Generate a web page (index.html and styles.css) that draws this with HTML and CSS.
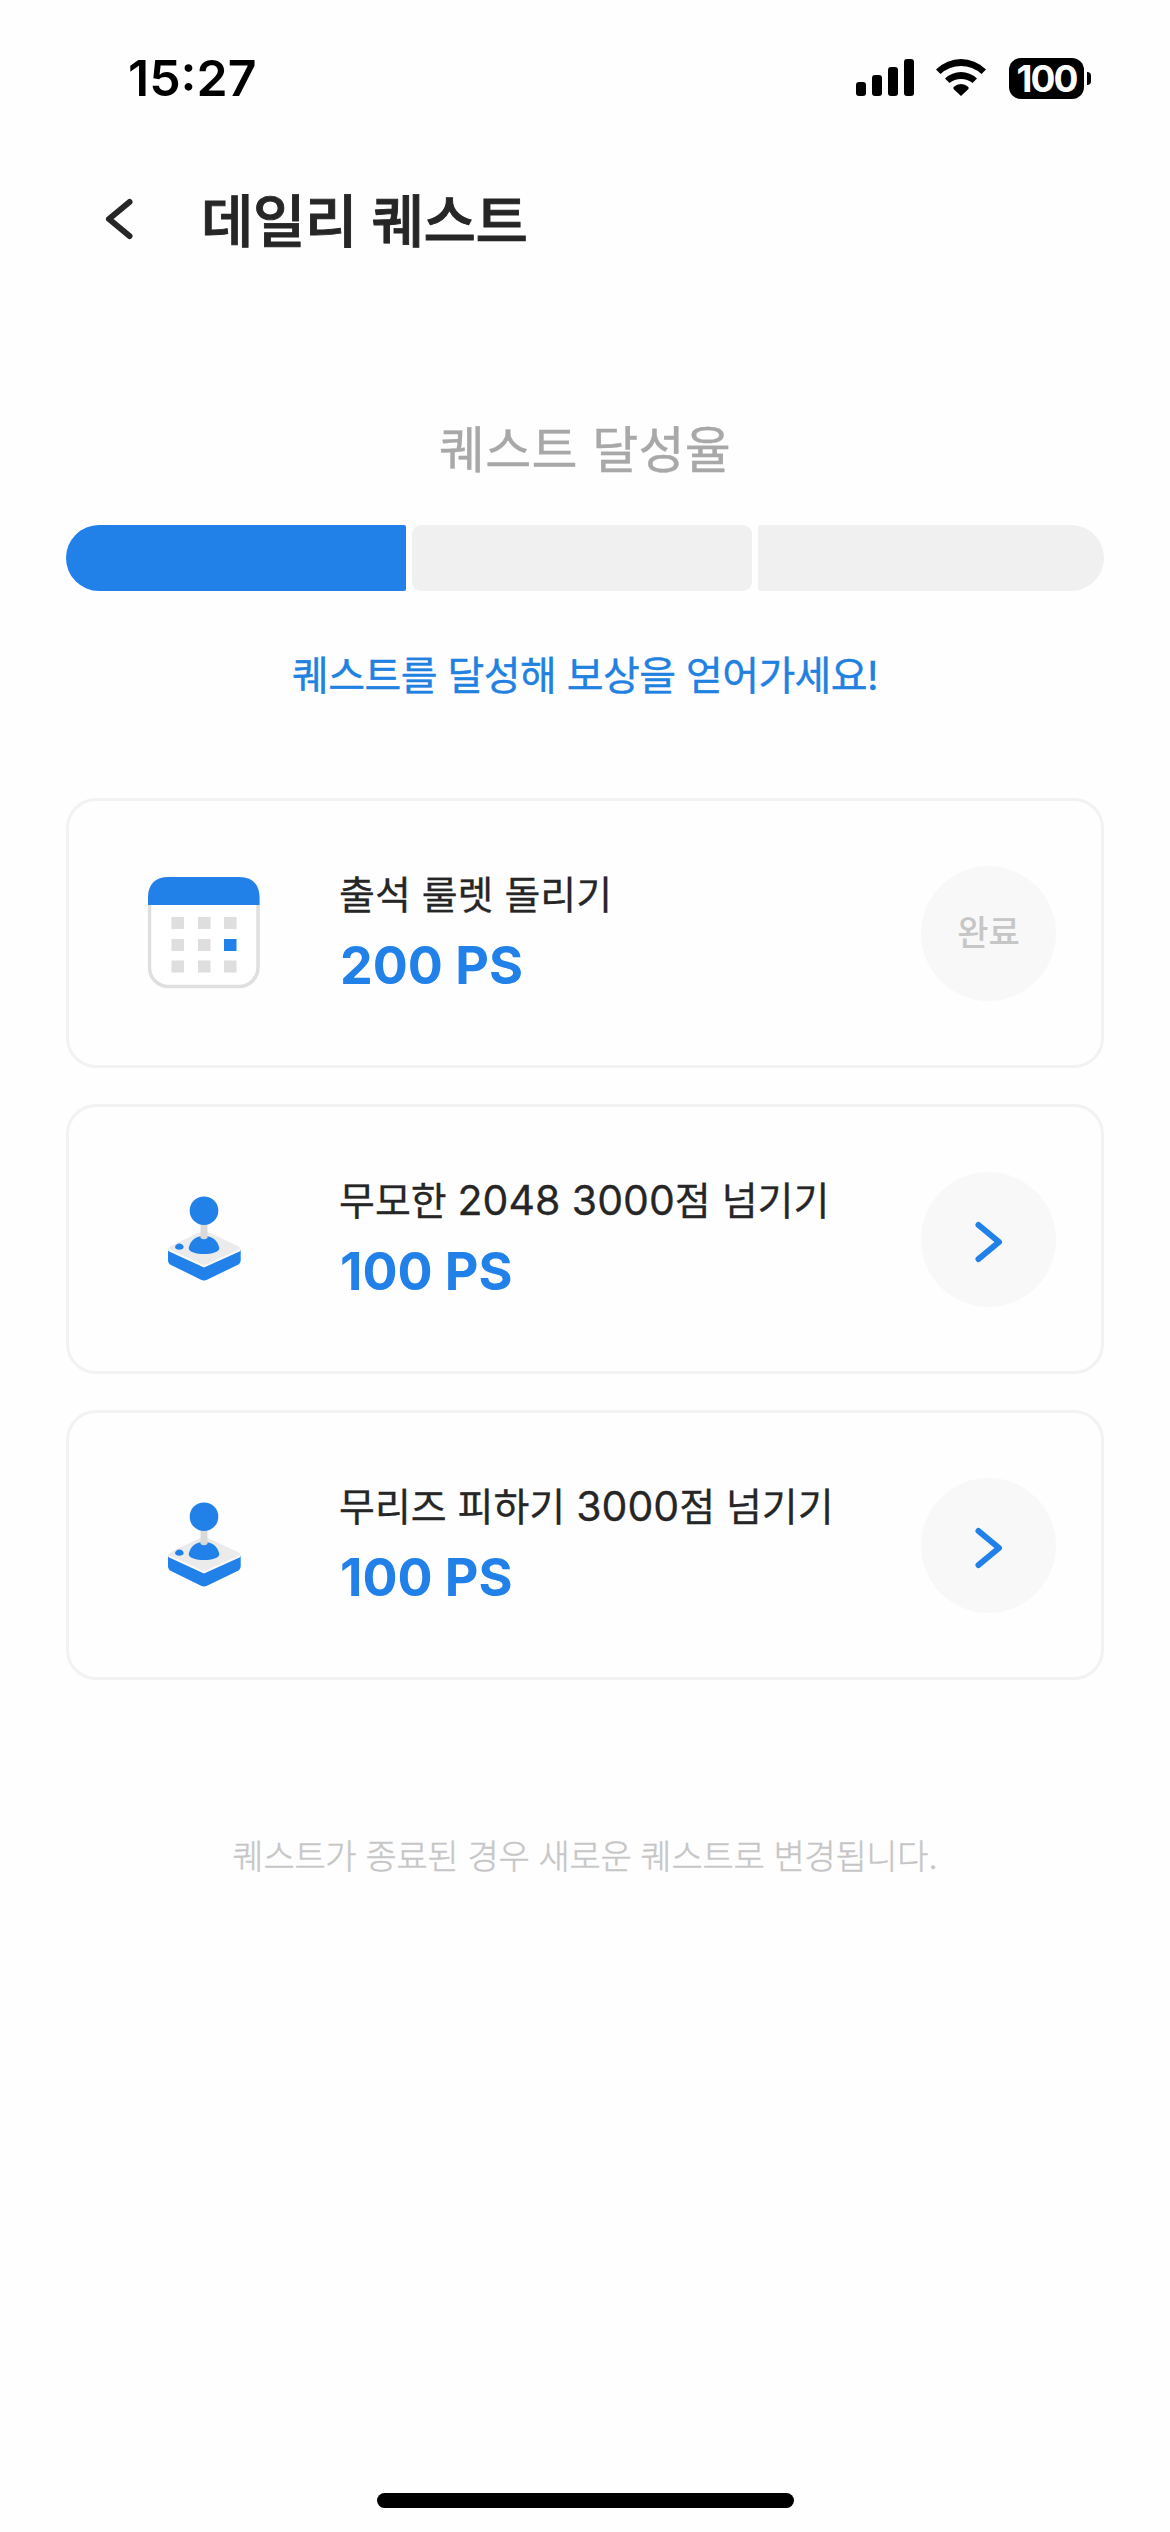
FILE: index.html
```html
<!DOCTYPE html>
<html lang="ko">
<head>
<meta charset="utf-8">
<title>데일리 퀘스트</title>
<link rel="stylesheet" href="styles.css">
</head>
<body>
<div class="screen">
  <div class="status-bar">
    <span class="time">15:27</span>
    <div class="status-icons">
      <svg class="signal" viewBox="0 0 58 38"><rect x="0" y="23" width="10" height="14" rx="3"/><rect x="16" y="16" width="10" height="21" rx="3"/><rect x="32" y="8" width="10" height="29" rx="3"/><rect x="48" y="0" width="10" height="37" rx="3"/></svg>
      <svg class="wifi" viewBox="0 0 50 38"><path d="M0 10.5Q11 0 25 0T50 10.500L45.500 15Q36.500 7 25 7T4.500 15Z"/><path d="M9 19.500Q16 13 25 13T41 19.500L36.500 24Q31.500 20 25 20T13.500 24Z"/><path d="M17.500 28Q21 25 25 25T32.500 28V30L25 37L17.500 30Z"/></svg>
      <div class="battery"><span class="battery-level">100</span><span class="battery-tip"></span></div>
    </div>
  </div>

  <header class="header">
    <svg class="back" viewBox="0 0 28 42"><path d="M24.500 4L4 21L24.500 38"/></svg>
    <h1 class="title">데일리 퀘스트</h1>
  </header>

  <main class="content">
    <h2 class="progress-title">퀘스트 달성율</h2>
    <div class="progress">
      <span class="step step-first done"></span>
      <span class="step step-middle"></span>
      <span class="step step-last"></span>
    </div>
    <p class="progress-note">퀘스트를 달성해 보상을 얻어가세요!</p>

    <ul class="quests">
      <li class="quest">
        <svg class="quest-icon" viewBox="0 0 112 112">
          <rect x="1.500" y="1.500" width="108.500" height="108" rx="19" fill="#fff" stroke="#dfdfdf" stroke-width="3.500"/>
          <path d="M0 28V21Q0 0 21 0H90.500Q111.500 0 111.500 21V28Z" fill="#2181e8"/>
          <g fill="#dedede"><path d="M23.500 40h12.500v12h-12.500zM50 40h12.500v12h-12.500zM76 40h12.500v12h-12.500zM23.500 62h12.500v12h-12.500zM50 62h12.500v12h-12.500zM23.500 83.500h12.500v12h-12.500zM50 83.500h12.500v12h-12.500zM76 83.500h12.500v12h-12.500z"/></g>
          <path d="M76 62h12.500v12h-12.500z" fill="#2181e8"/>
        </svg>
        <div class="quest-text"><p class="quest-name">출석 룰렛 돌리기</p><p class="quest-reward">200 PS</p></div>
        <span class="action action-done">완료</span>
      </li>
      <li class="quest">
        <svg class="quest-icon" viewBox="0 0 112 112">
          <path d="M20 67V77Q20 80.500 23 82L53 96.700Q56 98.200 59 96.700L89.500 82Q92.700 80.500 92.700 77V67L56 62Z" fill="#2181e8"/>
          <path d="M20 67Q20 64.500 24 62.500L50 50Q56 47 62 50L88.700 62.500Q92.700 64.500 92.700 67L56 84Z" fill="#ebebeb"/>
          <path d="M20.500 67L56 83.500L92.200 67" fill="none" stroke="#fafafa" stroke-width="2"/>
          <path d="M40.700 65Q43.500 53 56 53T71.300 65C71.300 73 40.700 73 40.700 65Z" fill="#2181e8"/>
          <path d="M27 64Q28 60.500 31.400 60.500T35.700 64C35.700 67.500 27 67.500 27 64Z" fill="#2181e8"/>
          <path d="M52.500 38H59.500V55Q56 57.500 52.500 55Z" fill="#d9d9d9"/>
          <circle cx="56" cy="27.700" r="14.300" fill="#2181e8"/>
        </svg>
        <div class="quest-text"><p class="quest-name">무모한 <span class="num">2048 3000</span>점 넘기기</p><p class="quest-reward">100 PS</p></div>
        <span class="action"><svg class="go" viewBox="0 0 28 42"><path d="M3.500 4L24 21L3.500 38"/></svg></span>
      </li>
      <li class="quest">
        <svg class="quest-icon" viewBox="0 0 112 112">
          <path d="M20 67V77Q20 80.500 23 82L53 96.700Q56 98.200 59 96.700L89.500 82Q92.700 80.500 92.700 77V67L56 62Z" fill="#2181e8"/>
          <path d="M20 67Q20 64.500 24 62.500L50 50Q56 47 62 50L88.700 62.500Q92.700 64.500 92.700 67L56 84Z" fill="#ebebeb"/>
          <path d="M20.500 67L56 83.500L92.200 67" fill="none" stroke="#fafafa" stroke-width="2"/>
          <path d="M40.700 65Q43.500 53 56 53T71.300 65C71.300 73 40.700 73 40.700 65Z" fill="#2181e8"/>
          <path d="M27 64Q28 60.500 31.400 60.500T35.700 64C35.700 67.500 27 67.500 27 64Z" fill="#2181e8"/>
          <path d="M52.500 38H59.500V55Q56 57.500 52.500 55Z" fill="#d9d9d9"/>
          <circle cx="56" cy="27.700" r="14.300" fill="#2181e8"/>
        </svg>
        <div class="quest-text"><p class="quest-name">무리즈 피하기 <span class="num">3000</span>점 넘기기</p><p class="quest-reward">100 PS</p></div>
        <span class="action"><svg class="go" viewBox="0 0 28 42"><path d="M3.500 4L24 21L3.500 38"/></svg></span>
      </li>
    </ul>
    <p class="footnote">퀘스트가 종료된 경우 새로운 퀘스트로 변경됩니다.</p>
  </main>
  <div class="home-indicator"></div>
</div>
</body>
</html>
```
FILE: styles.css
```css
* {
  box-sizing: border-box;
  margin: 0;
  padding: 0;
}

body {
  background: #fefefe;
  color: #262626;
  font-family: Inter, "Noto Sans CJK KR", sans-serif;
}

.screen {
  display: flex;
  flex-direction: column;
  width: 1170px;
  height: 2532px;
  padding-bottom: 24px;
}

.status-bar {
  display: flex;
  align-items: center;
  justify-content: space-between;
  height: 156px;
  padding: 0 79px 0 128px;
}

.time {
  color: #000;
  font-size: 50px;
  font-weight: 600;
  line-height: 60px;
}

.status-icons {
  display: flex;
  align-items: center;
}

.signal {
  width: 58px;
  height: 38px;
  margin-right: 22px;
}

.wifi {
  width: 50px;
  height: 38px;
  margin-right: 23px;
}

.battery {
  display: flex;
  align-items: center;
  gap: 3px;
}

.battery-level {
  width: 75px;
  height: 41px;
  border-radius: 12px;
  background: #000;
  color: #fff;
  font-size: 37px;
  font-weight: 700;
  line-height: 41px;
  text-align: center;
  letter-spacing: -2px;
}

.battery-tip {
  width: 4px;
  height: 13px;
  border-radius: 0 4px 4px 0;
  background: #000;
}

.header {
  display: flex;
  align-items: center;
  height: 132px;
  padding-left: 105px;
}

.back {
  width: 28px;
  height: 42px;
  margin: 0 68px 6px 0;
  fill: none;
  stroke: #262626;
  stroke-width: 6;
  stroke-linecap: round;
  stroke-linejoin: round;
}

.title {
  font-size: 57px;
  font-weight: 500;
  line-height: 80px;
  letter-spacing: -0.5px;
  -webkit-text-stroke: 0.9px currentColor;
}

.content {
  display: flex;
  flex-direction: column;
  padding: 0 66px;
}

.progress-title {
  margin-top: 126px;
  color: #a8a8a8;
  font-size: 50px;
  font-weight: 400;
  line-height: 72px;
  letter-spacing: 0.3px;
  text-align: center;
  -webkit-text-stroke: 0.4px currentColor;
}

.progress {
  display: grid;
  grid-template-columns: 340px 340px 346px;
  gap: 6px;
  height: 66px;
  margin-top: 39px;
}

.step {
  background: #f0f0f0;
}

.step-first {
  border-radius: 33px 2px 2px 33px;
}

.step-middle {
  border-radius: 9px;
}

.step-last {
  border-radius: 3px 33px 33px 3px;
}

.done {
  background: #2181e8;
}

.progress-note {
  margin-top: 55px;
  color: #2181e0;
  font-size: 40px;
  font-weight: 400;
  line-height: 60px;
  letter-spacing: -0.6px;
  text-align: center;
  -webkit-text-stroke: 0.4px currentColor;
}

.quests {
  display: flex;
  flex-direction: column;
  gap: 36px;
  margin-top: 92px;
  list-style: none;
}

.quest {
  display: flex;
  align-items: center;
  height: 270px;
  padding: 0 45px 0 79px;
  border: 3px solid #f2f2f2;
  border-radius: 30px;
}

.quest-icon {
  width: 112px;
  height: 112px;
  margin-right: 79px;
}

.quest-text {
  flex: 1;
}

.quest-name {
  font-size: 39px;
  line-height: 60px;
  -webkit-text-stroke: 0.3px currentColor;
}

.num {
  font-size: 41px;
  line-height: 0;
}

.quest-reward {
  margin: 6px 0 0 1px;
  color: #2181e8;
  font-size: 52px;
  font-weight: 700;
  font-kerning: none;
  line-height: 70px;
}

.action {
  display: flex;
  align-items: center;
  justify-content: center;
  width: 135px;
  height: 135px;
  border-radius: 50%;
  background: #f8f8f8;
}

.action-done {
  padding-bottom: 6px;
  color: #c6c6c6;
  font-size: 34px;
  font-weight: 500;
}

.go {
  width: 28px;
  height: 42px;
  margin-top: 6px;
  fill: none;
  stroke: #2181e8;
  stroke-width: 6;
  stroke-linecap: round;
  stroke-linejoin: round;
}

.footnote {
  margin-top: 153px;
  color: #c6c6c6;
  font-size: 34px;
  font-weight: 300;
  line-height: 48px;
  letter-spacing: -0.35px;
  text-align: center;
  -webkit-text-stroke: 0.4px currentColor;
}

.home-indicator {
  width: 417px;
  height: 15px;
  margin: auto auto 0;
  border-radius: 8px;
  background: #000;
}
```
